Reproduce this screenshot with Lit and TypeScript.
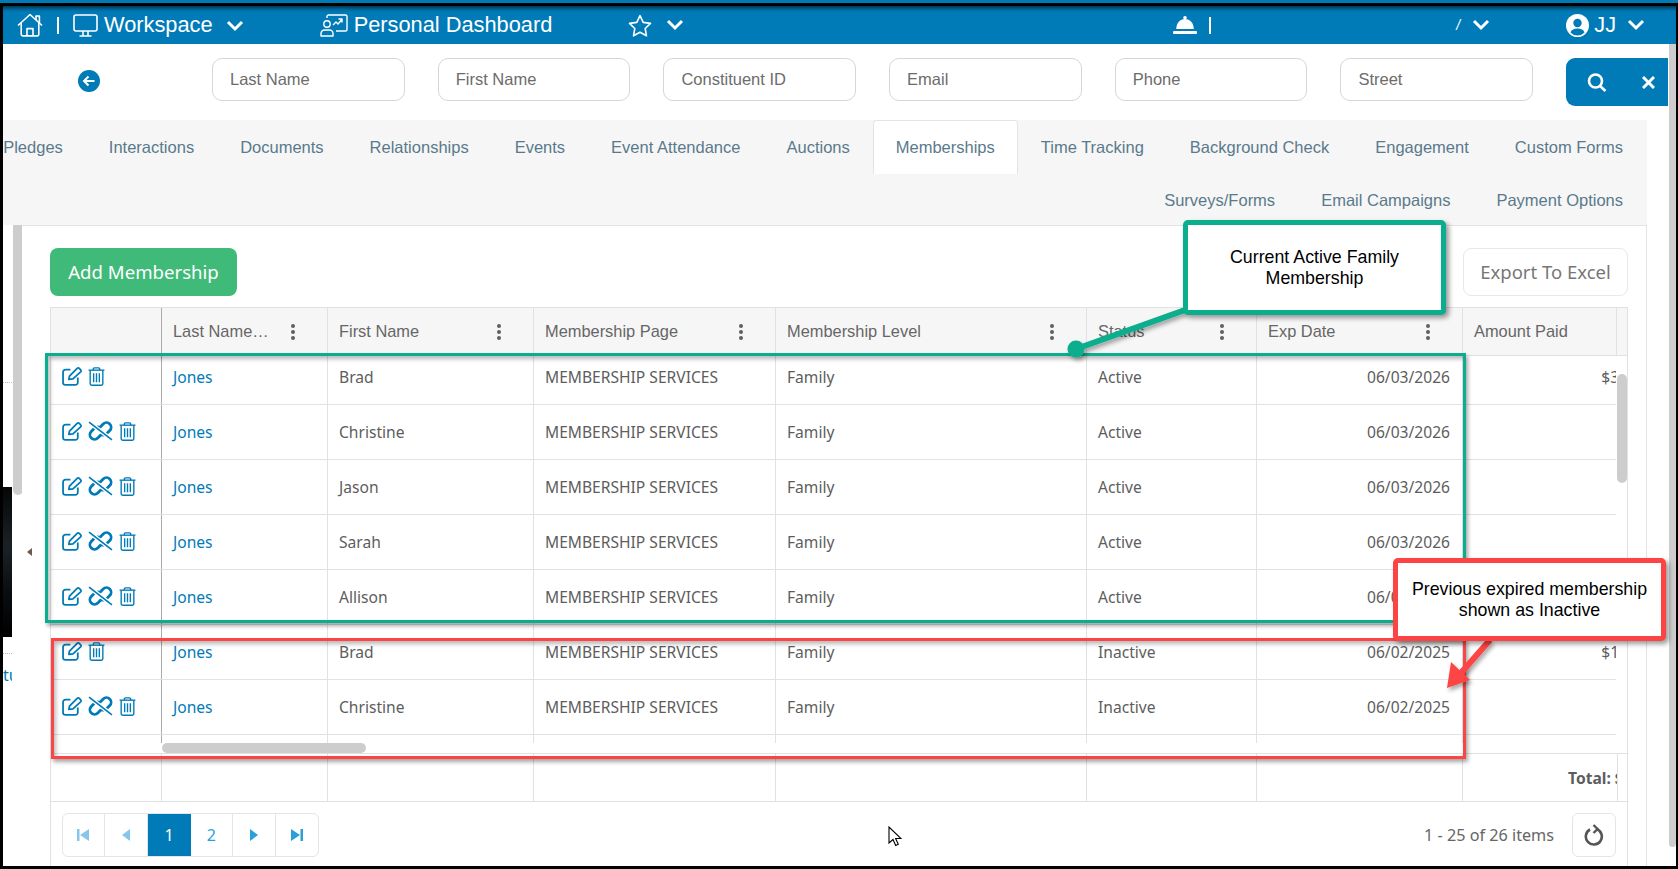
import { LitElement, html, css, svg } from "lit";
import { customElement } from "lit/decorators.js";

const chevron = html`<svg class="chev" viewBox="0 0 18 12"><path d="M2 2l7 7 7-7" fill="none" stroke="#fff" stroke-width="3"/></svg>`;

const homeIcon = html`<svg width="26" height="24" viewBox="0 0 26 24" fill="none" stroke="#fff" stroke-width="1.6" stroke-linejoin="round"><path d="M1 12.5L13 1.5l12 11"/><path d="M19 7V3h3.4v7"/><path d="M4.2 10v11.3a1.6 1.6 0 0 0 1.6 1.6h14.4a1.6 1.6 0 0 0 1.6-1.6V10"/><path d="M10 23v-7.4h6V23"/></svg>`;

const monitorIcon = html`<svg width="25" height="23" viewBox="0 0 25 23" fill="none" stroke="#fff" stroke-width="1.6"><rect x="1" y="1" width="23" height="16" rx="2"/><path d="M10 17v4.5M15 17v4.5M6.5 22h12"/></svg>`;

const dashIcon = html`<svg width="28" height="23" viewBox="0 0 28 23" fill="none" stroke="#fff" stroke-width="1.4" stroke-linejoin="round"><circle cx="7" cy="10" r="3.2"/><path d="M1 22v-2.5a3.5 3.5 0 0 1 3.5-3.5h5a3.5 3.5 0 0 1 3.5 3.5V22z"/><path d="M7 4V2.6A1.6 1.6 0 0 1 8.6 1h16.8A1.6 1.6 0 0 1 27 2.6v12.8a1.6 1.6 0 0 1-1.6 1.6H16"/><path d="M13 11l3-3 2 2 4-4.5M18.5 5H22v3.5"/></svg>`;

const starIcon = html`<svg width="24" height="23" viewBox="0 0 24 23" fill="none" stroke="#fff" stroke-width="1.6" stroke-linejoin="round"><path d="M12 1.6l3.2 6.8 7.3 1-5.3 5.1 1.3 7.3-6.5-3.5-6.5 3.5 1.3-7.3L1.5 9.4l7.3-1z"/></svg>`;

const bellIcon = html`<svg width="24" height="18" viewBox="0 0 24 18" fill="#fff"><circle cx="12" cy="1.8" r="1.8"/><path d="M12 3c-5 0-8.5 3.8-8.8 10h17.6C20.5 6.8 17 3 12 3z"/><rect x="0" y="15" width="24" height="3" rx="1"/></svg>`;

const userIcon = html`<svg width="23" height="23" viewBox="0 0 23 23"><circle cx="11.5" cy="11.5" r="11.5" fill="#fff"/><circle cx="11.5" cy="9" r="4.2" fill="#007bb8"/><path d="M4.5 18.5c1-3 3.5-4 7-4s6 1 7 4a9.5 9.5 0 0 1-14 0z" fill="#007bb8"/></svg>`;

const editIcon = html`<svg width="20" height="19" viewBox="0 0 19 18" fill="none" stroke="#007bb8" stroke-width="1.7" stroke-linejoin="round"><path d="M8 2.5H3.3A2.3 2.3 0 0 0 1 4.8v9.900A2.3 2.3 0 0 0 3.3 17h9.400a2.3 2.3 0 0 0 2.3-2.3V10"/><path d="M6.5 11.800l.6-3.200L14.400 1.300a1.400 1.400 0 0 1 2 0l1.300 1.300a1.400 1.400 0 0 1 0 2L10.400 11.200z"/></svg>`;

const trashIcon = html`<svg width="17" height="19" viewBox="0 0 16 18" fill="none" stroke="#007bb8" stroke-width="1.3"><path d="M0.5 3h15"/><path d="M5 3V1.8A1 1 0 0 1 6 .8h4a1 1 0 0 1 1 1V3"/><path d="M2 3v12.700A1.6 1.6 0 0 0 3.6 17.300h8.800a1.6 1.6 0 0 0 1.6-1.600V3"/><path d="M5.3 6v8.500M8 6v8.500M10.700 6v8.500"/></svg>`;

const unlinkIcon = html`<svg width="25" height="20" viewBox="0 0 24 19" fill="none" stroke="#007bb8"><path d="M12 5.500l2.600-2.700a4.400 4.400 0 0 1 6.300 6.200l-3.300 3.300a4.400 4.400 0 0 1-6.100 0" stroke-width="2.700"/><path d="M12 13.500l-2.600 2.700a4.400 4.400 0 0 1-6.300-6.200l3.300-3.300a4.400 4.400 0 0 1 6.100 0" stroke-width="2.700"/><path d="M1 1l22 17" stroke="#fff" stroke-width="4"/><path d="M1 1l22 17" stroke-width="1.6"/></svg>`;

const kebab = html`<svg class="kebab" width="4" height="16" viewBox="0 0 4 16" fill="#5f5f5f"><circle cx="2" cy="2" r="2"/><circle cx="2" cy="8" r="2"/><circle cx="2" cy="14" r="2"/></svg>`;

const pagerIcon = (d: string, fill: string) => html`<svg width="14" height="14" viewBox="0 0 14 14" fill="${fill}"><path d="${d}"/></svg>`;

const rows = [
  { first: "Brad", status: "Active", date: "06/03/2026", amount: "$360.00", unlink: false },
  { first: "Christine", status: "Active", date: "06/03/2026", amount: "", unlink: true },
  { first: "Jason", status: "Active", date: "06/03/2026", amount: "", unlink: true },
  { first: "Sarah", status: "Active", date: "06/03/2026", amount: "", unlink: true },
  { first: "Allison", status: "Active", date: "06/03/2026", amount: "", unlink: true },
  { first: "Brad", status: "Inactive", date: "06/02/2025", amount: "$175.00", unlink: false },
  { first: "Christine", status: "Inactive", date: "06/02/2025", amount: "", unlink: true },
];

const columns = ["Last Name…", "First Name", "Membership Page", "Membership Level", "Status", "Exp Date"];

@customElement("app-root")
export class AppRoot extends LitElement {
  static styles = css`
    :host {
      display: block;
      font-family: "Liberation Sans", Arial, sans-serif;
    }
    .page {
      position: relative;
      width: 1678px;
      height: 869px;
      overflow: hidden;
      display: flex;
      flex-direction: column;
      background: #000;
    }
    .top-strip {
      height: 3px;
      background: #007bb8;
    }
    .frame {
      flex: 1;
      min-height: 0;
      padding: 3px 2px 3px 3px;
      display: flex;
    }
    .app {
      flex: 1;
      display: flex;
      flex-direction: column;
      background: #fff;
      min-width: 0;
    }

    .topbar {
      height: 38px;
      flex: none;
      display: flex;
      align-items: center;
      background: #007bb8;
      color: #fff;
      font-size: 21.8px;
      padding-left: 14px;
      box-shadow: inset 0 5px 4px -3px rgba(0, 0, 0, 0.65);
      white-space: nowrap;
    }
    .hgroup {
      display: flex;
      align-items: center;
    }
    .chev {
      width: 18px;
      height: 12px;
    }
    .sep {
      width: 2px;
      height: 17px;
      background: #fff;
    }
    .home-group {
      gap: 14px;
    }
    .workspace-text {
      margin-left: -8px;
    }
    .workspace-chev {
      margin-left: -1px;
    }
    .dash-group {
      margin-left: 76px;
      gap: 6px;
    }
    .star-group {
      margin-left: 76px;
      gap: 14px;
    }
    .bell-group {
      margin-left: 489px;
      gap: 12px;
    }
    .tick {
      font-size: 14px;
      font-style: italic;
    }
    .slash-group {
      margin-left: 245px;
      gap: 12px;
    }
    .user-group {
      margin-left: 76px;
      gap: 5px;
    }
    .user-group .chev {
      margin-left: 6px;
    }

    .body {
      flex: 1;
      min-height: 0;
      display: flex;
    }
    .main {
      flex: 1;
      min-width: 0;
      display: flex;
      flex-direction: column;
    }
    .page-scroll {
      width: 7px;
      height: 803px;
      background: #cdcdcd;
      border-radius: 0 0 4px 4px;
    }

    .search {
      height: 76px;
      flex: none;
      display: flex;
      align-items: flex-start;
      padding: 14px 0 0 75px;
      box-sizing: border-box;
    }
    .back {
      width: 22px;
      height: 22px;
      margin: 12px 112px 0 0;
      flex: none;
    }
    .search input {
      width: 192.7px;
      height: 43px;
      box-sizing: border-box;
      border: 1px solid #d2d6de;
      border-radius: 10px;
      padding: 0 17px;
      margin-right: 33px;
      font: 16.5px "Liberation Sans", Arial, sans-serif;
      flex: none;
      background: #fff;
    }
    .search input::placeholder {
      color: #6c6c6c;
      opacity: 1;
    }
    .go {
      flex: none;
      width: 102px;
      height: 48px;
      background: #007bb8;
      border-radius: 9px 0 0 9px;
      display: flex;
      align-items: center;
      padding-left: 21px;
      box-sizing: border-box;
      gap: 35px;
    }

    .tabs {
      margin-right: 22px;
      padding-right: 1px;
      height: 105px;
      flex: none;
      background: #f6f6f6;
      font-size: 16.5px;
      color: #5a7a8c;
      overflow: hidden;
    }
    .tab-row {
      display: flex;
      justify-content: flex-end;
      align-items: center;
      white-space: nowrap;
    }
    .tab-row.one {
      height: 54px;
    }
    .tab-row.two {
      height: 53px;
    }
    .tab {
      flex: none;
      height: 100%;
      display: flex;
      align-items: center;
      padding: 0 23px;
      box-sizing: border-box;
    }
    .tab.active {
      background: #fff;
      border: 1px solid #e4e4e4;
      border-bottom: 0;
      border-radius: 4px 4px 0 0;
      padding: 0 22px;
      color: #5a7a8c;
    }

    .work {
      flex: 1;
      min-height: 0;
      display: flex;
    }
    .side {
      position: relative;
      width: 19px;
      flex: none;
      overflow: hidden;
    }
    .side-thumb {
      position: absolute;
      left: 9.5px;
      top: 0;
      width: 10px;
      height: 270px;
      background: #cdcdcd;
      border-radius: 0 0 5px 5px;
    }
    .side-strip {
      width: 9px;
      overflow: hidden;
    }
    .dots-a {
      height: 158px;
      border-bottom: 1px dotted #bbb;
      box-sizing: border-box;
    }
    .photo {
      margin-top: 104px;
      height: 150px;
      background: linear-gradient(180deg, #060606, #1a2228 40%, #0a0d10 70%, #000);
    }
    .dots-b {
      height: 17px;
      border-bottom: 1px dotted #bbb;
      box-sizing: border-box;
    }
    .side-text {
      margin-top: 10px;
      font: 16px "Noto Sans", sans-serif;
      color: #007bb8;
      white-space: nowrap;
      overflow: hidden;
    }

    .panel {
      position: relative;
      width: 1625px;
      flex: none;
      box-sizing: border-box;
      border-top: 1px solid #e3e3e3;
      border-right: 1px solid #e3e3e3;
      padding: 22px 18px 0 28px;
      display: flex;
      flex-direction: column;
    }
    .split-handle {
      position: absolute;
      left: 5px;
      top: 322px;
      width: 0;
      height: 0;
      border-style: solid;
      border-width: 4px 5px 4px 0;
      border-color: transparent #6b5b50 transparent transparent;
    }
    .toolbar {
      height: 48px;
      flex: none;
      display: flex;
      justify-content: space-between;
      margin-bottom: 11px;
    }
    .add {
      width: 187px;
      background: #3fba78;
      color: #fff;
      border-radius: 8px;
      font: 18.6px "Noto Sans", sans-serif;
      display: flex;
      align-items: center;
      justify-content: center;
      padding-bottom: 2px;
      box-sizing: border-box;
    }
    .export {
      width: 165px;
      box-sizing: border-box;
      border: 1px solid #e8e8e8;
      border-radius: 8px;
      color: #777;
      font: 18.5px "Noto Sans", sans-serif;
      display: flex;
      align-items: center;
      justify-content: center;
      padding-bottom: 2px;
    }

    .grid {
      flex: 1;
      min-height: 0;
      border: 1px solid #e1e1e1;
      border-bottom: 0;
      display: flex;
      flex-direction: column;
    }
    .cols {
      display: grid;
      grid-template-columns: 111px 166px 206px 242px 311px 170px 206px 154px;
    }
    .head {
      height: 48px;
      flex: none;
      box-sizing: border-box;
      background: #f6f6f6;
      border-bottom: 1px solid #e1e1e1;
      color: #666;
      font-size: 16.4px;
    }
    .head > div {
      display: flex;
      align-items: center;
      justify-content: space-between;
      box-sizing: border-box;
      padding: 0 32px 0 11px;
      border-right: 1px solid #e1e1e1;
    }
    .head > div.lead,
    .line > div.lead {
      border-right-color: #aaa;
    }
    .scroller {
      height: 387px;
      flex: none;
      display: flex;
    }
    .clip {
      width: 1565px;
      flex: none;
      overflow: hidden;
    }
    .rows {
      margin-top: -6px;
      width: 1620px;
    }
    .line {
      grid-template-columns: 111px 166px 206px 242px 311px 170px 206px 208px;
      height: 55px;
      box-sizing: border-box;
      border-bottom: 1px solid #dfe2e7;
      font: 15.6px "Noto Sans", sans-serif;
      color: #5d5d5d;
    }
    .line > div {
      display: flex;
      align-items: center;
      box-sizing: border-box;
      padding: 0 11px;
      border-right: 1px solid #dfe2e7;
      white-space: nowrap;
    }
    .line > div.actions {
      gap: 6px;
      padding-bottom: 2px;
    }
    .line > div.right {
      justify-content: flex-end;
      padding-right: 12px;
    }
    .line > div.amount {
      border-right: 0;
    }
    .line a {
      color: #007bb8;
      text-decoration: none;
    }
    .vtrack {
      flex: 1;
      background: #fff;
    }
    .vthumb {
      margin: 18px 0 0 1px;
      width: 10px;
      height: 109px;
      background: #cdcdcd;
      border-radius: 5px;
    }
    .htrack {
      height: 11px;
      flex: none;
      box-sizing: border-box;
      border-bottom: 1px solid #e1e1e1;
      padding-left: 111px;
    }
    .hthumb {
      width: 204px;
      height: 10px;
      background: #cdcdcd;
      border-radius: 5px;
    }
    .foot {
      grid-template-columns: 111px 166px 206px 242px 311px 170px 206px 155px;
      height: 48px;
      flex: none;
      box-sizing: border-box;
      border-bottom: 1px solid #e1e1e1;
    }
    .foot > div {
      border-right: 1px solid #e1e1e1;
      overflow: hidden;
    }
    .total {
      font: bold 15.6px/48px "Noto Sans", sans-serif;
      color: #5d5d5d;
      padding-left: 105px;
      white-space: nowrap;
    }
    .pager-row {
      flex: 1;
      display: flex;
      align-items: flex-start;
      padding: 11px 11px 0 10.5px;
    }
    .pager {
      display: flex;
      height: 44px;
      box-sizing: border-box;
      border: 1px solid #e3e5ea;
      border-radius: 6px;
      overflow: hidden;
    }
    .pager > div {
      width: 42.5px;
      box-sizing: border-box;
      display: flex;
      align-items: center;
      justify-content: center;
      border-right: 1px solid #e3e5ea;
      color: #2a9fd8;
      font: 16px "Noto Sans", sans-serif;
    }
    .pager > div:last-child {
      border-right: 0;
    }
    .pager > div.on {
      background: #007bb8;
      color: #fff;
      border-right: 0;
      width: 43px;
    }
    .count {
      margin-left: auto;
      font: 16.2px/44px "Noto Sans", sans-serif;
      color: #666;
    }
    .refresh {
      margin-left: 18px;
      width: 44px;
      height: 44px;
      box-sizing: border-box;
      border: 1px solid #e3e5ea;
      border-radius: 6px;
      display: flex;
      align-items: center;
      justify-content: center;
    }

    /* screenshot annotations drawn over the page */
    .mark {
      position: absolute;
      box-sizing: border-box;
      border: 3px solid;
      box-shadow: 2px 3px 4px rgba(0, 0, 0, 0.35), inset 2px 3px 4px rgba(0, 0, 0, 0.28);
    }
    .mark.green {
      left: 45px;
      top: 353px;
      width: 1421px;
      height: 270px;
      border-color: #0aae8e;
    }
    .mark.red {
      left: 51px;
      top: 638px;
      width: 1415px;
      height: 121px;
      border-color: #fc4445;
    }
    .overlay {
      position: absolute;
      left: 0;
      top: 0;
      pointer-events: none;
    }
    .callout {
      position: absolute;
      box-sizing: border-box;
      display: flex;
      align-items: center;
      justify-content: center;
      text-align: center;
      background: #fff;
      border: 5px solid;
      border-radius: 5px;
      color: #000;
      font-size: 17.8px;
      line-height: 21px;
      box-shadow: 3px 3px 5px rgba(0, 0, 0, 0.4);
    }
    .callout.green {
      left: 1183px;
      top: 220px;
      width: 263px;
      height: 95px;
      border-color: #0aae8e;
    }
    .callout.red {
      left: 1393px;
      top: 558px;
      width: 273px;
      height: 83px;
      border-color: #fc4445;
    }
    .cursor {
      position: absolute;
      left: 888px;
      top: 826px;
    }
  `;

  renderRow(r: (typeof rows)[number]) {
    return html`
      <div class="cols line">
        <div class="lead actions">${editIcon}${r.unlink ? unlinkIcon : ""}${trashIcon}</div>
        <div><a>Jones</a></div>
        <div>${r.first}</div>
        <div>MEMBERSHIP SERVICES</div>
        <div>Family</div>
        <div>${r.status}</div>
        <div class="right">${r.date}</div>
        <div class="right amount">${r.amount}</div>
      </div>
    `;
  }

  render() {
    const inputs = ["Last Name", "First Name", "Constituent ID", "Email", "Phone", "Street"];
    const tabsOne = ["Pledges", "Interactions", "Documents", "Relationships", "Events", "Event Attendance", "Auctions", "Memberships", "Time Tracking", "Background Check", "Engagement", "Custom Forms"];
    const tabsTwo = ["Surveys/Forms", "Email Campaigns", "Payment Options"];

    return html`
      <div class="page">
        <div class="top-strip"></div>
        <div class="frame">
          <div class="app">
            <div class="topbar">
              <div class="hgroup home-group">
                ${homeIcon}<span class="sep"></span>${monitorIcon}
                <span class="workspace-text">Workspace</span>
                <span class="workspace-chev">${chevron}</span>
              </div>
              <div class="hgroup dash-group">${dashIcon}<span>Personal Dashboard</span></div>
              <div class="hgroup star-group">${starIcon}${chevron}</div>
              <div class="hgroup bell-group">${bellIcon}<span class="sep"></span></div>
              <div class="hgroup slash-group"><span class="tick">/</span>${chevron}</div>
              <div class="hgroup user-group">${userIcon}<span>JJ</span>${chevron}</div>
            </div>
            <div class="body">
              <div class="main">
                <div class="search">
                  <svg class="back" viewBox="0 0 22 22"><circle cx="11" cy="11" r="11" fill="#007bb8"/><path d="M16.5 11H6.5M10.5 6.5L6 11l4.5 4.5" fill="none" stroke="#fff" stroke-width="2"/></svg>
                  ${inputs.map((p) => html`<input placeholder=${p} />`)}
                  <div class="go">
                    <svg width="20" height="19" viewBox="0 0 20 19" fill="none" stroke="#fff" stroke-width="2.6"><circle cx="8.5" cy="8" r="6.5"/><path d="M13 13l5.5 5"/></svg>
                    <svg width="13" height="13" viewBox="0 0 13 13" fill="none" stroke="#fff" stroke-width="3"><path d="M1 1l11 11M12 1L1 12"/></svg>
                  </div>
                </div>
                <div class="tabs">
                  <div class="tab-row one">
                    ${tabsOne.map((t) => html`<div class="tab ${t === "Memberships" ? "active" : ""}">${t}</div>`)}
                  </div>
                  <div class="tab-row two">${tabsTwo.map((t) => html`<div class="tab">${t}</div>`)}</div>
                </div>
                <div class="work">
                  <div class="side">
                    <div class="side-strip">
                      <div class="dots-a"></div>
                      <div class="photo"></div>
                      <div class="dots-b"></div>
                      <div class="side-text">tu</div>
                    </div>
                    <div class="side-thumb"></div>
                  </div>
                  <div class="panel">
                    <div class="split-handle"></div>
                    <div class="toolbar">
                      <div class="add">Add Membership</div>
                      <div class="export">Export To Excel</div>
                    </div>
                    <div class="grid">
                      <div class="cols head">
                        <div class="lead"></div>
                        ${columns.map((c) => html`<div><span>${c}</span>${kebab}</div>`)}
                        <div>Amount Paid</div>
                      </div>
                      <div class="scroller">
                        <div class="clip">
                          <div class="rows">
                            ${rows.map((r) => this.renderRow(r))}
                            <div class="cols line"><div class="lead"></div><div></div><div></div><div></div><div></div><div></div><div></div><div class="amount"></div></div>
                          </div>
                        </div>
                        <div class="vtrack"><div class="vthumb"></div></div>
                      </div>
                      <div class="htrack"><div class="hthumb"></div></div>
                      <div class="cols foot">
                        <div></div><div></div><div></div><div></div><div></div><div></div><div></div>
                        <div class="total">Total: $535.00</div>
                      </div>
                      <div class="pager-row">
                        <div class="pager">
                          <div>${pagerIcon("M1 1h2.5v12H1zM13 1v12L4 7z", "#85c6ea")}</div>
                          <div>${pagerIcon("M11 1v12L3 7z", "#85c6ea")}</div>
                          <div class="on">1</div>
                          <div>2</div>
                          <div>${pagerIcon("M3 1v12l8-6z", "#2a9fd8")}</div>
                          <div>${pagerIcon("M1 1v12l9-6zM10.5 1H13v12h-2.5z", "#2a9fd8")}</div>
                        </div>
                        <div class="count">1 - 25 of 26 items</div>
                        <div class="refresh">
                          <svg width="20" height="22" viewBox="0 0 20 22" fill="none" stroke="#555" stroke-width="2.6"><path d="M6 5.5a8 8 0 1 0 6.5-.5"/><path d="M9.5 1l4 4-4 4" stroke-width="2.4"/></svg>
                        </div>
                      </div>
                    </div>
                  </div>
                </div>
              </div>
              <div class="page-scroll"></div>
            </div>
          </div>
        </div>

        <div class="mark green"></div>
        <div class="mark red"></div>
        <svg class="overlay" width="1678" height="869">
          ${svg`
            <defs><filter id="sh" x="-20%" y="-20%" width="150%" height="150%"><feDropShadow dx="2" dy="3" stdDeviation="2" flood-opacity="0.35"/></filter></defs>
            <g filter="url(#sh)">
              <path d="M1185 310L1076 349" stroke="#0aae8e" stroke-width="6" fill="none"/>
              <circle cx="1076" cy="349" r="8.5" fill="#0aae8e"/>
            </g>
            <g filter="url(#sh)">
              <path d="M1490 640L1460 674" stroke="#fc4445" stroke-width="6" fill="none"/>
              <path d="M1447 688L1451 662L1470 680z" fill="#fc4445"/>
            </g>
          `}
        </svg>
        <div class="callout green"><span>Current Active Family<br />Membership</span></div>
        <div class="callout red"><span>Previous expired membership<br />shown as Inactive</span></div>
        <svg class="cursor" width="14" height="21" viewBox="0 0 14 21"><path d="M1 1v16l4-3.5 2.7 6 2.6-1.2-2.7-5.800H13z" fill="#fff" stroke="#000" stroke-width="1.1"/></svg>
      </div>
    `;
  }
}
